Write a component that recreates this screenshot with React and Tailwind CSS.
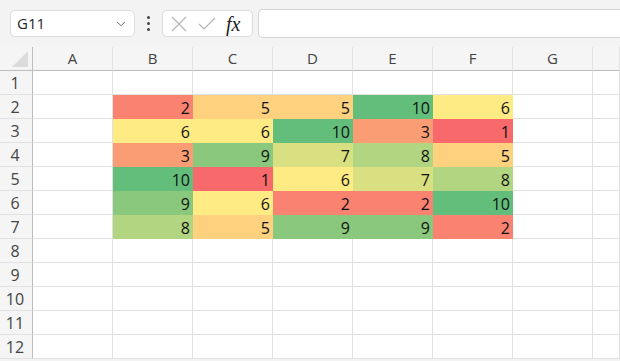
import { ChevronDown } from "lucide-react";

const cols = ["A", "B", "C", "D", "E", "F", "G", ""];

// values for B..F, rows 2..7
const data = [
  [2, 5, 5, 10, 6],
  [6, 6, 10, 3, 1],
  [3, 9, 7, 8, 5],
  [10, 1, 6, 7, 8],
  [9, 6, 2, 2, 10],
  [8, 5, 9, 9, 2],
];

// 3-colour scale, red -> yellow (mid = 6) -> green
const fills = {
  1: "bg-[#F8696B]",
  2: "bg-[#F98370]",
  3: "bg-[#FA9D75]",
  5: "bg-[#FED17F]",
  6: "bg-[#FFEB84]",
  7: "bg-[#D8E082]",
  8: "bg-[#B1D580]",
  9: "bg-[#8AC97D]",
  10: "bg-[#63BE7B]",
};

function Toolbar() {
  return (
    <div className="h-[47px] flex items-start pt-[10px] pl-[10px] gap-0">
      <div className="w-[125px] h-[27px] bg-white border border-[#dcdcdc] rounded-[5px] flex items-center justify-between pl-[6px] pr-[6px]">
        <span className="text-[15px] text-[#262626] leading-none">G11</span>
        <ChevronDown className="w-[14px] h-[14px] text-[#555]" strokeWidth={1.5} />
      </div>
      <div className="w-[27px] h-[27px] flex flex-col items-center justify-center gap-[3px]">
        <span className="w-[3px] h-[3px] bg-[#444] rounded-full" />
        <span className="w-[3px] h-[3px] bg-[#444] rounded-full" />
        <span className="w-[3px] h-[3px] bg-[#444] rounded-full" />
      </div>
      <div className="w-[91px] h-[27px] bg-white border border-[#dcdcdc] rounded-[5px] flex items-center pl-[6px]">
        <svg width="18" height="18" viewBox="0 0 18 18" className="ml-[1px]">
          <path d="M2 2 L16 16 M16 2 L2 16" stroke="#b5b5b5" strokeWidth="1.2" fill="none" />
        </svg>
        <svg width="20" height="18" viewBox="0 0 20 18" className="ml-[9px]">
          <path d="M2 9 L7 14 L18 3" stroke="#b5b5b5" strokeWidth="1.2" fill="none" />
        </svg>
        <span className="ml-[9px] text-[20px] italic text-[#222] leading-none font-['Liberation_Serif',serif]">fx</span>
      </div>
      <div className="flex-1 ml-[5px] h-[29px] -mt-[1px] bg-white border-y border-l border-[#d4d4d4] rounded-l-[5px]" />
    </div>
  );
}

function Grid() {
  const rows = Array.from({ length: 12 }, (_, i) => i + 1);
  return (
    <div className="grid grid-cols-[33px_repeat(7,80px)_1fr] bg-white">
      {/* header row */}
      <div className="h-[24px] bg-[#f5f5f5] border-r border-b border-[#bdbdbd] relative">
        <svg width="17" height="17" viewBox="0 0 17 17" className="absolute right-[3px] bottom-[2px]">
          <path d="M16 0 L16 16 L0 16 Z" fill="#dcdcdc" />
        </svg>
      </div>
      {cols.map((c, i) => (
        <div
          key={i}
          className="h-[24px] bg-[#f5f5f5] border-b border-[#bdbdbd] border-r border-r-[#e3e3e3] flex items-center justify-center text-[15px] text-[#444] leading-none"
        >
          {c}
        </div>
      ))}
      {rows.map((r) => (
        <Row key={r} r={r} />
      ))}
    </div>
  );
}

function Row({ r }) {
  const vals = r >= 2 && r <= 7 ? data[r - 2] : null;
  return (
    <>
      <div className="h-[24px] bg-[#f5f5f5] border-r border-[#bdbdbd] border-b border-b-[#e1e1e1] flex items-center justify-center pr-[2px] text-[16px] text-[#444] leading-none">
        {r}
      </div>
      {cols.map((c, i) => {
        const v = vals && i >= 1 && i <= 5 ? vals[i - 1] : null;
        if (v !== null) {
          return (
            <div
              key={i}
              className={`h-[24px] ${fills[v]} flex items-center justify-end pr-[3px] pt-[2px] text-[16px] text-[#111] leading-none`}
            >
              {v}
            </div>
          );
        }
        return <div key={i} className="h-[24px] border-r border-b border-[#e1e1e1]" />;
      })}
    </>
  );
}

export default function App() {
  return (
    <div className="w-[620px] h-[361px] overflow-hidden bg-[#f3f3f3] font-['Open_Sans',sans-serif]">
      <Toolbar />
      <Grid />
    </div>
  );
}
